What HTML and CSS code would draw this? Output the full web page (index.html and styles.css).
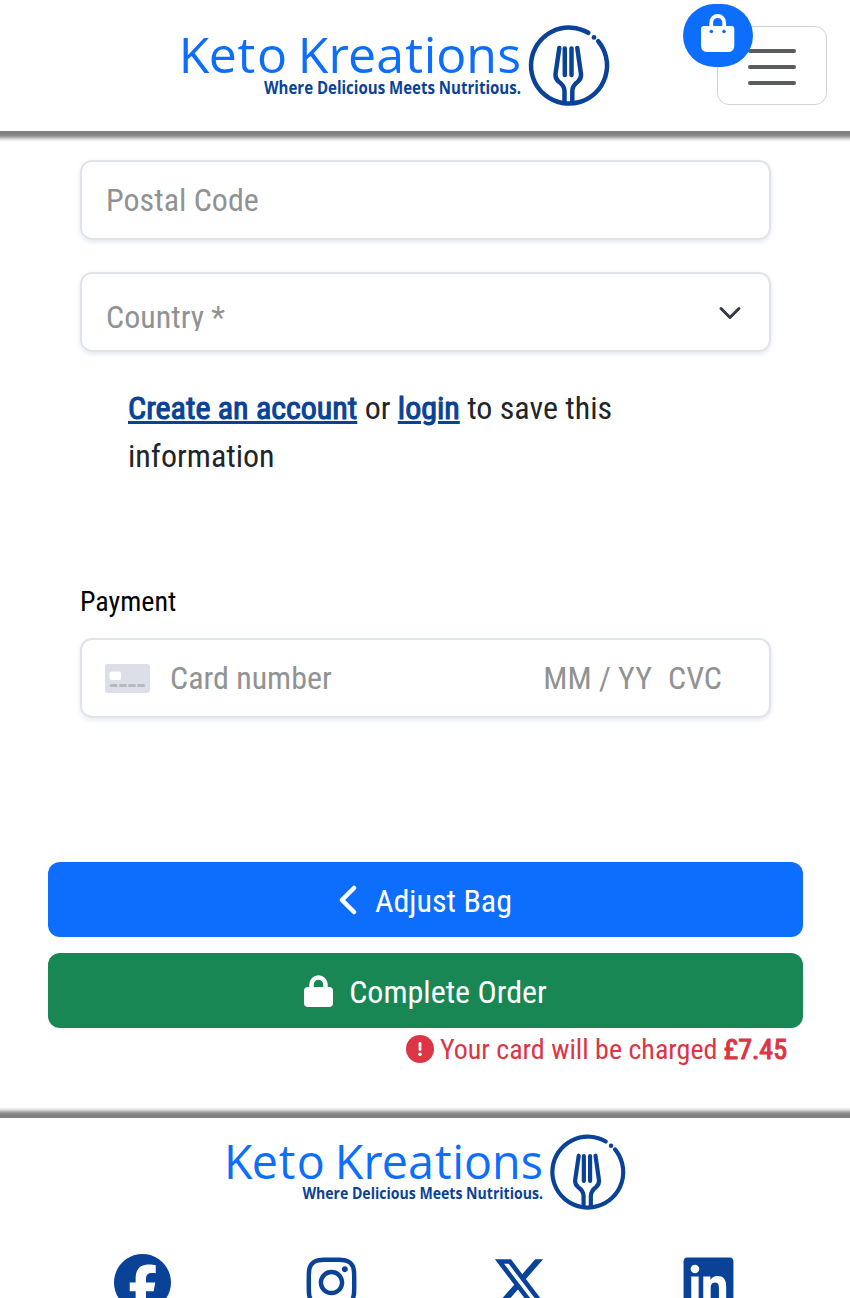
FILE: index.html
```html
<!DOCTYPE html>
<html lang="en">
<head>
<meta charset="utf-8">
<title>Keto Kreations - Checkout</title>
<link rel="stylesheet" href="styles.css">
</head>
<body>
<header class="header">
  <svg class="logo header-logo" viewBox="0 0 430 84">
    <text class="logo-name" y="48.700" x="-1.200 28.700 57.600 76.900">Keto</text>
    <text class="logo-name" y="48.700" x="117.800 148.500 168 196.300 225.300 243.700 256.200 286.200 317.200">Kreations</text>
    <text class="logo-tag" x="84" y="70.200" textLength="257" lengthAdjust="spacingAndGlyphs">Where Delicious Meets Nutritious.</text>
    <g class="logo-mark">
      <path d="M418.200 17.200A38 38 0 1 1 408.300 8.800"/>
      <path d="M379.300 24 375.500 50Q375 54.500 378.500 57.500Q384.300 61.500 384.500 67V77M397.300 24 401 50Q401.500 54.500 398 57.500Q392.500 61.500 392.300 67V77"/>
      <path d="M384.800 24.500V51M391.500 24.500V51"/>
    </g>
    <circle cx="414" cy="13.400" r="2.400" fill="#0a4298"/>
  </svg>
  <div class="menu">
    <button class="toggler" aria-label="Menu"><i></i><i></i><i></i></button>
    <a class="bag" aria-label="Bag">
      <svg width="34" height="38" viewBox="0 0 34 38"><path d="M10.200 15V8.500A6.500 6.500 0 0 1 23.200 8.500V15" fill="none" stroke="#fff" stroke-width="3.800"/><path d="M3 12H30.500Q33.300 12 33.300 15V31.500Q33.300 38 27.500 38H6Q0 38 0 31.500V15Q0 12 3 12Z" fill="#fff"/><circle cx="10.300" cy="17.500" r="1.800" fill="#0d6efd"/><circle cx="23" cy="17.500" r="1.800" fill="#0d6efd"/></svg>
    </a>
  </div>
</header>

<main class="checkout">
  <form class="fields">
    <div class="field placeholder">Postal Code</div>
    <div class="field placeholder country"><span class="clip">Country *</span>
      <svg width="24" height="24" viewBox="0 0 16 16"><path d="m2 5 6 6 6-6" fill="none" stroke="#343a40" stroke-width="2" stroke-linecap="round" stroke-linejoin="round"/></svg>
    </div>
    <p class="account"><a>Create an account</a> or <a>login</a> to save this information</p>
    <div class="legend">Payment</div>
    <div class="field card">
      <svg width="45" height="29" viewBox="0 0 45 29"><rect width="45" height="29" rx="3" fill="#dcdfe7"/><rect x="4.500" y="7.500" width="11.500" height="8.500" rx="2" fill="#fff"/><path d="M6 21.500h5M15.500 21.500h5M24.500 21.500h5M33.500 21.500h5" stroke="#b4b9c6" stroke-width="3" stroke-linecap="round"/></svg>
      <span>Card number</span><span class="expiry">MM / YY</span><span class="cvc">CVC</span>
    </div>
  </form>
  <div class="actions">
    <button class="btn blue"><svg width="18" height="30" viewBox="0 0 18 30"><path d="M15 3 3 15 15 27" fill="none" stroke="#fff" stroke-width="4.500" stroke-linecap="round" stroke-linejoin="round"/></svg><span>Adjust Bag</span></button>
    <button class="btn green"><svg width="29" height="32" viewBox="0 0 29 32"><path d="M7.500 14V9.500A7 7 0 0 1 21.500 9.500V14" fill="none" stroke="#fff" stroke-width="4.500"/><rect y="12" width="29" height="20" rx="4" fill="#fff"/></svg><span>Complete Order</span></button>
    <p class="charge"><svg width="28" height="28" viewBox="0 0 28 28"><circle cx="14" cy="14" r="14" fill="#dc3545"/><path d="M14 8.500V14.500" stroke="#fff" stroke-width="2.800" stroke-linecap="round"/><circle cx="14" cy="19.300" r="1.800" fill="#fff"/></svg><span>Your card will be charged <strong>£7.45</strong></span></p>
  </div>
</main>

<footer class="footer">
  <svg class="logo footer-logo" viewBox="0 0 430 84">
    <text class="logo-name" y="48.700" x="-1.200 28.700 57.600 76.900">Keto</text>
    <text class="logo-name" y="48.700" x="117.800 148.500 168 196.300 225.300 243.700 256.200 286.200 317.200">Kreations</text>
    <text class="logo-tag" x="83" y="70.500" textLength="258" lengthAdjust="spacingAndGlyphs">Where Delicious Meets Nutritious.</text>
    <g class="logo-mark">
      <path d="M418.200 17.200A38 38 0 1 1 408.300 8.800"/>
      <path d="M379.300 24 375.500 50Q375 54.500 378.500 57.500Q384.300 61.500 384.500 67V77M397.300 24 401 50Q401.500 54.500 398 57.500Q392.500 61.500 392.300 67V77"/>
      <path d="M384.800 24.500V51M391.500 24.500V51"/>
    </g>
    <circle cx="414" cy="13.400" r="2.400" fill="#0a4298"/>
  </svg>
  <nav class="social">
    <a><svg viewBox="0 0 512 512"><path d="M512 256C512 114.600 397.400 0 256 0S0 114.600 0 256C0 376 82.700 476.800 194.200 504.500V334.200H141.400V256h52.800V222.300c0-87.100 39.400-127.500 125-127.500c16.200 0 44.200 3.200 55.700 6.400V172c-6-.6-16.500-1-29.600-1c-42 0-58.200 15.900-58.200 57.200V256h83.600l-14.400 78.200H287V510.100C413.800 494.800 512 386.900 512 256z"/></svg></a>
    <a><svg viewBox="-32 0 512 512"><path d="M224.100 141c-63.600 0-114.900 51.300-114.900 114.900s51.300 114.900 114.900 114.900S339 319.500 339 255.900 287.700 141 224.100 141zm0 189.600c-41.100 0-74.700-33.500-74.700-74.700s33.500-74.700 74.700-74.700 74.700 33.500 74.700 74.700-33.600 74.700-74.700 74.700zm146.400-194.300c0 14.900-12 26.800-26.800 26.800-14.900 0-26.800-12-26.800-26.800s12-26.800 26.800-26.800 26.800 12 26.800 26.800zm76.100 27.200c-1.700-35.900-9.900-67.700-36.200-93.900-26.200-26.200-58-34.400-93.900-36.200-37-2.100-147.900-2.100-184.900 0-35.800 1.700-67.600 9.900-93.900 36.100s-34.400 58-36.200 93.900c-2.100 37-2.100 147.900 0 184.900 1.700 35.900 9.900 67.700 36.200 93.900s58 34.400 93.900 36.200c37 2.100 147.900 2.100 184.900 0 35.900-1.700 67.700-9.900 93.900-36.200 26.200-26.200 34.400-58 36.200-93.900 2.100-37 2.100-147.800 0-184.800zM398.800 388c-7.800 19.600-22.900 34.700-42.600 42.600-29.500 11.700-99.500 9-132.100 9s-102.700 2.600-132.100-9c-19.600-7.800-34.700-22.900-42.600-42.600-11.700-29.500-9-99.500-9-132.100s-2.600-102.700 9-132.100c7.800-19.600 22.900-34.700 42.600-42.600 29.500-11.700 99.500-9 132.100-9s102.700-2.600 132.100 9c19.600 7.800 34.700 22.900 42.600 42.600 11.700 29.500 9 99.500 9 132.100s2.700 102.700-9 132.100z"/></svg></a>
    <a><svg viewBox="-8 0 512 512"><path d="M389.200 48h70.600L305.600 224.200 487 464H345L233.700 318.600 106.500 464H35.800L200.700 275.500 26.800 48H172.400L272.900 180.900 389.200 48zM364.400 421.800h39.100L151.100 88h-42L364.400 421.800z"/></svg></a>
    <a><svg viewBox="-32 0 512 512"><path d="M416 32H31.900C14.300 32 0 46.500 0 64.300v383.400C0 465.500 14.300 480 31.900 480H416c17.600 0 32-14.500 32-32.300V64.300c0-17.800-14.400-32.300-32-32.300zM135.400 416H69V202.200h66.500V416zm-33.200-243c-21.300 0-38.500-17.300-38.500-38.500S80.900 96 102.200 96c21.200 0 38.500 17.300 38.500 38.500 0 21.300-17.200 38.500-38.500 38.500zm282.100 243h-66.400V312c0-24.800-.5-56.700-34.500-56.700-34.600 0-39.900 27-39.900 54.900V416h-66.400V202.200h63.700v29.200h.9c8.900-16.800 30.600-34.500 62.200-34.500 66.500 0 78.900 43.800 78.900 100.900V416z"/></svg></a>
  </nav>
</footer>
</body>
</html>
```

FILE: styles.css
```css
* { box-sizing: border-box; }
body { margin: 0; height: 1298px; overflow: hidden; display: flex; flex-direction: column; background: #fff; color: #212529; font: 32px/48px "Roboto Condensed", Roboto, sans-serif; font-stretch: 75%; }
p { margin: 0; }
svg { display: block; flex: none; }
button { font: inherit; font-stretch: inherit; border: 0; padding: 0; }

.logo { overflow: visible; font-family: "Open Sans", sans-serif; font-stretch: 100%; }
.logo-name { font-size: 50px; font-weight: 430; font-stretch: 91%; fill: #0d6efd; }
.logo-tag { font-size: 17px; font-weight: 700; font-stretch: 95%; fill: #0a4298; }
.logo-mark { fill: none; stroke: #0a4298; stroke-width: 4.5px; stroke-linecap: round; stroke-linejoin: round; }

.header { height: 131px; flex: none; display: flex; justify-content: space-between; padding: 24px 23px 0 180px; box-shadow: 0 2px 4px 5px #808080; }
.header-logo { width: 430px; height: 84px; }
.menu { position: relative; padding-top: 2px; }
.toggler { display: flex; flex-direction: column; align-items: center; justify-content: center; gap: 12px; width: 110px; height: 79px; padding-top: 2px; border: 1px solid #d3d3d3; border-radius: 12px; background: #fff; }
.toggler i { width: 48px; height: 4px; border-radius: 2px; background: #595b5d; }
.bag { position: absolute; left: -34px; top: -20px; width: 70px; height: 63px; border-radius: 32px; background: #0d6efd; display: flex; justify-content: center; padding-top: 10px; }

.checkout { flex: none; height: 987px; padding: 29px 47px 0 48px; }
.fields { padding: 0 32px; }
.field { display: flex; align-items: center; height: 80px; margin-bottom: 32px; padding: 0 24px; border: 2px solid #e0e4e9; border-radius: 12px; box-shadow: 0 2px 5px #e4e8ef; }
.placeholder, .card { color: #919293; }
.country { justify-content: space-between; padding-right: 27px; }
.country svg { margin-top: 2px; }
.clip { height: 41px; overflow: hidden; padding-top: 3px; margin-top: -4px; }
.account { padding: 0 48px; margin-top: 32px; }
.account a { color: #0a4298; -webkit-text-stroke: 1.1px #0a4298; text-decoration: underline; text-decoration-thickness: 3px; }
.legend { margin: 104px 0 19px; font-size: 28px; line-height: 35px; color: #000; }
.card svg { margin: 0 20px 0 -1px; }
.expiry { margin-left: auto; }
.cvc { margin: 0 23px 0 16px; }
.actions { padding-top: 112px; }
.btn { width: 100%; height: 75px; display: flex; align-items: center; justify-content: center; border-radius: 12px; color: #fff; margin-bottom: 16px; }
.btn span { padding-top: 2px; }
.blue { background: #0d6efd; }
.blue svg { margin-right: 18px; }
.green { background: #198754; }
.green svg { margin-right: 16px; }
.charge { display: flex; align-items: center; justify-content: flex-end; gap: 6px; margin-top: -16px; padding-right: 16px; font-size: 28px; line-height: 42px; color: #dc3545; }
.charge svg { margin-top: -2px; }
.charge span { padding-top: 1px; }
.charge strong { font-weight: 400; -webkit-text-stroke: 1.1px #dc3545; }

.footer { flex: none; height: 180px; background: #fff; box-shadow: 0 -2px 4px 5px #808080; display: flex; flex-direction: column; align-items: center; padding: 15px 47px 0 48px; }
.footer-logo { width: 401px; height: 79px; }
.social { width: 100%; display: grid; grid-template-columns: repeat(4, 1fr); justify-items: center; margin-top: 42px; }
.social svg { width: 57px; height: 57px; fill: #0a4298; }
```
